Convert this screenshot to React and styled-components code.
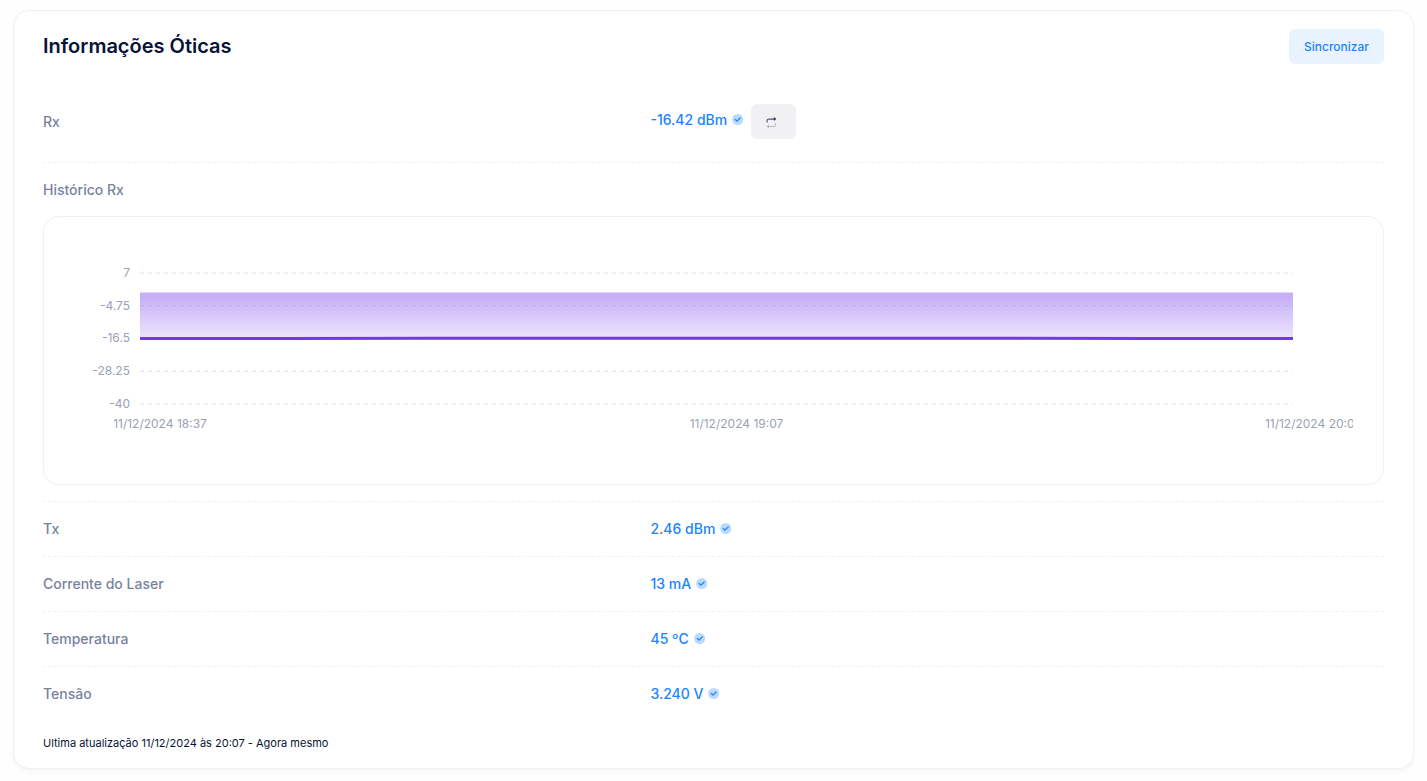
import React, { useLayoutEffect, useRef, useState } from 'react'
import styled, { createGlobalStyle } from 'styled-components'

const GlobalStyle = createGlobalStyle`
  * {
    box-sizing: border-box;
  }
  body {
    margin: 0;
    background: #fefefe;
    color: #071437;
    font-family: Inter, "Liberation Sans", sans-serif;
    font-size: 14px;
  }
`

const Card = styled.section`
  margin: 10px 13px 12px;
  padding: 18px 29px 17px;
  background: #fff;
  border: 1px solid #f1f1f4;
  border-radius: 16px;
  box-shadow: 0 3px 4px rgba(0, 0, 0, 0.03);
`

const CardHeader = styled.header`
  display: flex;
  align-items: center;
  justify-content: space-between;
  margin-bottom: 24px;
`

const Title = styled.h3`
  margin: 0;
  padding-bottom: 2px;
  font-size: 20px;
  line-height: 24px;
  font-weight: 600;
`

const Button = styled.button`
  height: 35px;
  padding: 0 15px;
  border: 0;
  border-radius: 6px;
  background: #e9f3ff;
  color: #1b84ff;
  font-family: inherit;
  font-size: 12px;
  font-weight: 500;
  cursor: pointer;
`

const IconButton = styled(Button)`
  display: flex;
  align-items: center;
  width: 45px;
  margin-left: 7px;
  background: #f1f1f4;
  color: #252f4a;
`

const Row = styled.div`
  display: flex;
  align-items: center;
  padding: ${({ $tall }) => ($tall ? '16px 0 23px' : '16px 0')};
  border-bottom: ${({ $last }) => ($last ? '0' : '1px dashed #f1f1f4')};
`

const Label = styled.div`
  width: 45%;
  line-height: 22px;
  font-weight: 500;
  color: #78829d;
`

const ValueCell = styled.div`
  display: flex;
  flex: 1;
  align-items: center;
  padding-left: 4px;
`

const Value = styled.span`
  display: flex;
  align-items: center;
  gap: 5px;
  line-height: 22px;
  padding-bottom: ${({ $raised }) => ($raised ? '4px' : '0')};
  font-weight: 500;
  color: #1b84ff;
`

const History = styled.div`
  padding: 16px 0;
  border-bottom: 1px dashed #f1f1f4;
`

const ChartBox = styled.div`
  height: 269px;
  margin-top: 15px;
  padding: 30px;
  border: 1px solid #f1f1f4;
  border-radius: 16px;
`

const ChartSvg = styled.svg`
  display: block;
  width: 100%;
  height: 207px;
  overflow: hidden;

  text {
    font-size: 12px;
    fill: #99a1b7;
  }
`

const Updated = styled.p`
  margin: 14px 0 0;
  font-size: 11px;
  line-height: 16px;
`

const VerifiedIcon = () => (
  <svg width="12" height="12" viewBox="0 0 12 12" fill="none" aria-hidden="true">
    <circle cx="5.7" cy="5.5" r="5.5" fill="#bbdaff" />
    <path d="M3.3 5.5 5 7.1 8.2 4" stroke="#1b84ff" strokeWidth="1.3" strokeLinecap="round" strokeLinejoin="round" />
  </svg>
)

const RepeatIcon = () => (
  <svg width="12" height="14" viewBox="0 0 12 14" fill="none" aria-hidden="true">
    <path d="M1.1 7V5.4c0-.9.4-1.3 1.3-1.3H8.7" stroke="currentColor" strokeWidth="1" strokeLinecap="round" />
    <path d="M7.9 2.1 10.2 4.1 7.9 6.1z" fill="currentColor" />
    <g opacity="0.3">
      <path d="M9.5 8.6v1.7c0 .9-.4 1.3-1.3 1.3H2.4" stroke="currentColor" strokeWidth="1" strokeLinecap="round" />
      <path d="M3 9.6 0.7 11.6 3 13.6z" fill="currentColor" />
    </g>
  </svg>
)

const ticks = [7, -4.75, -16.5, -28.25, -40]
const dates = ['11/12/2024 18:37', '11/12/2024 19:07', '11/12/2024 20:07']
const samples = [-16.5, -16.5, -16.42, -16.42, -16.42, -16.42, -16.42, -16.5, -16.5]

const plot = { left: 66, right: 60, top: 26, height: 131 }
const toY = (value) => plot.top + ((7 - value) / 47) * plot.height

const RxChart = () => {
  const ref = useRef(null)
  const [width, setWidth] = useState(1279)

  useLayoutEffect(() => {
    const update = () => setWidth(ref.current.getBoundingClientRect().width)
    update()
    window.addEventListener('resize', update)
    return () => window.removeEventListener('resize', update)
  }, [])

  const end = width - plot.right
  const span = end - plot.left
  const points = samples.map((v, i) => `${plot.left + (span * i) / (samples.length - 1)},${toY(v)}`)

  return (
    <ChartSvg ref={ref} role="img" aria-label="Histórico Rx">
      <defs>
        <linearGradient id="rxFill" x1="0" y1="0" x2="0" y2="1">
          <stop offset="0.1" stopColor="#7239ea" stopOpacity="0.4" />
          <stop offset="1" stopColor="#7239ea" stopOpacity="0.13" />
        </linearGradient>
      </defs>
      {ticks.map((tick) => (
        <g key={tick}>
          {tick !== -16.5 && (
            <line x1={plot.left} x2={end} y1={toY(tick)} y2={toY(tick)} stroke="#e0e1ea" strokeDasharray="4" />
          )}
          <text x={plot.left - 10} y={Math.round(toY(tick) - 0.1) + 4} textAnchor="end">{tick}</text>
        </g>
      ))}
      <polygon points={`${plot.left},${toY(0)} ${points.join(' ')} ${end},${toY(0)}`} fill="url(#rxFill)" />
      <polyline points={points.join(' ')} fill="none" stroke="#7239ea" strokeWidth="3" />
      {dates.map((date, i) => (
        <text key={date} x={plot.left + 20 + (span * i) / 2} y={181} textAnchor="middle">{date}</text>
      ))}
    </ChartSvg>
  )
}

const readings = [
  { label: 'Tx', value: '2.46 dBm' },
  { label: 'Corrente do Laser', value: '13 mA' },
  { label: 'Temperatura', value: '45 ºC' },
  { label: 'Tensão', value: '3.240 V' },
]

const App = () => {
  return (
    <>
      <GlobalStyle />
      <Card>
        <CardHeader>
          <Title>Informações Óticas</Title>
          <Button type="button">Sincronizar</Button>
        </CardHeader>

        <Row $tall>
          <Label>Rx</Label>
          <ValueCell>
            <Value $raised>-16.42 dBm <VerifiedIcon /></Value>
            <IconButton type="button" aria-label="Atualizar Rx">
              <RepeatIcon />
            </IconButton>
          </ValueCell>
        </Row>

        <History>
          <Label>Histórico Rx</Label>
          <ChartBox>
            <RxChart />
          </ChartBox>
        </History>

        {readings.map((item, index) => (
          <Row key={item.label} $last={index === readings.length - 1}>
            <Label>{item.label}</Label>
            <ValueCell>
              <Value>{item.value} <VerifiedIcon /></Value>
            </ValueCell>
          </Row>
        ))}

        <Updated>Ultima atualização 11/12/2024 às 20:07 - Agora mesmo</Updated>
      </Card>
    </>
  )
}

export default App
